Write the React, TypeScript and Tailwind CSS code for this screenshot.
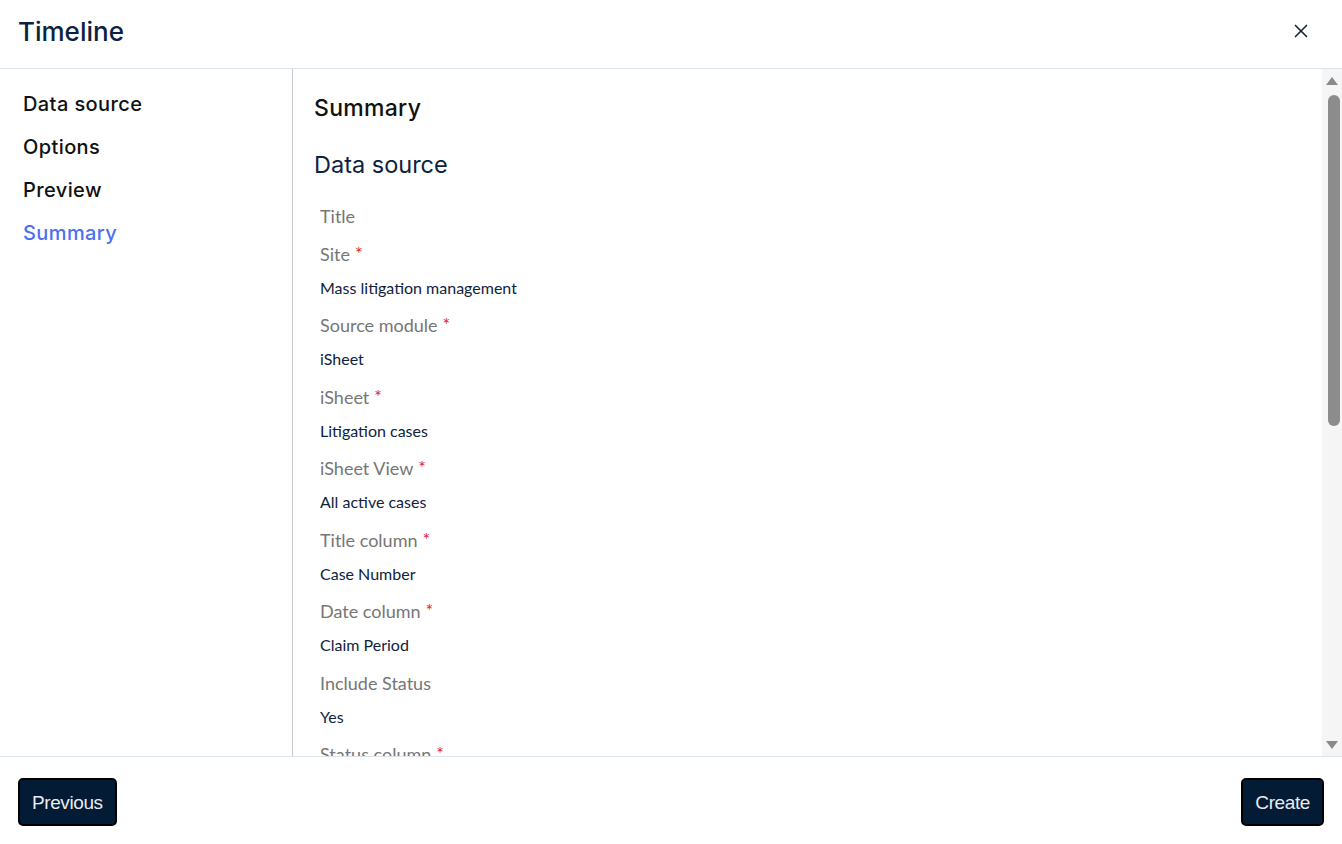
import { X } from "lucide-react";

const steps = ["Data source", "Options", "Preview", "Summary"];

const fields: { label: string; required?: boolean; value?: string }[] = [
  { label: "Title" },
  { label: "Site", required: true, value: "Mass litigation management" },
  { label: "Source module", required: true, value: "iSheet" },
  { label: "iSheet", required: true, value: "Litigation cases" },
  { label: "iSheet View", required: true, value: "All active cases" },
  { label: "Title column", required: true, value: "Case Number" },
  { label: "Date column", required: true, value: "Claim Period" },
  { label: "Include Status", value: "Yes" },
  { label: "Status column", required: true, value: "Status" },
];

const heading = { fontFamily: "Inter, 'Noto Sans', sans-serif" };
const body = { fontFamily: "Lato, 'Noto Sans', sans-serif" };

const Field = ({ label, required, value }: { label: string; required?: boolean; value?: string }) => (
  <div className="flex flex-col">
    <div className="h-[38px] flex items-center text-[18px] text-[#767676]">
      {label}
      {required && <span className="ml-[5px] text-[#e11d1d] text-[18px] -mt-[2px]">*</span>}
    </div>
    {value && <div className="h-[33.5px] pb-[4px] flex items-center text-[16px] text-[#0f2240]">{value}</div>}
  </div>
);

// classic scrollbar with arrow buttons
const ScrollRail = () => (
  <div className="w-[20px] bg-[#f5f5f5] flex flex-col items-center">
    <svg width="14" height="10" viewBox="0 0 14 10" className="mt-[7px]">
      <path d="M7 1 L13 9 L1 9 Z" fill="#8a8a8a" />
    </svg>
    <div className="mt-[9px] ml-[4px] w-[12px] h-[331px] rounded-full bg-[#8c8c8c]" />
    <div className="flex-1" />
    <svg width="14" height="10" viewBox="0 0 14 10" className="mb-[6px]">
      <path d="M1 1 L13 1 L7 9 Z" fill="#8a8a8a" />
    </svg>
  </div>
);

export default function App() {
  return (
    <div className="w-[1342px] h-[844px] bg-white flex flex-col overflow-hidden">
      <header className="h-[69px] shrink-0 flex items-center justify-between pl-[18px] pr-[30px] border-b border-[#dde3eb]">
        <h1 className="text-[26px] text-[#0b2340] font-medium -mt-[5px]" style={heading}>
          Timeline
        </h1>
        <X className="w-[22px] h-[22px] text-[#1a2436] -mt-[6px]" strokeWidth={1.8} />
      </header>

      <div className="flex flex-1 min-h-0">
        <nav className="w-[293px] shrink-0 border-r border-[#c8c8c8] pl-[23px] pt-[13px] flex flex-col" style={heading}>
          {steps.map((s) => (
            <div
              key={s}
              className={`h-[43px] flex items-center text-[20px] tracking-[0.4px] font-medium ${s === "Summary" ? "text-[#4d70f2]" : "text-[#111]"}`}
            >
              {s}
            </div>
          ))}
        </nav>

        <main className="flex-1 min-w-0 overflow-hidden pl-[21px] pt-[24px]">
          <h2 className="text-[23px] font-medium text-[#111] leading-[30px] tracking-[0.3px]" style={heading}>
            Summary
          </h2>
          <h3 className="mt-[27px] text-[23.5px] font-normal text-[#0b2340] leading-[30px]" style={heading}>
            Data source
          </h3>
          <div className="mt-[17px] pl-[6px] flex flex-col" style={body}>
            {fields.map((f) => (
              <Field key={f.label} {...f} />
            ))}
          </div>
        </main>

        <ScrollRail />
      </div>

      <footer className="h-[88px] shrink-0 border-t border-[#dde3eb] flex items-center justify-between px-[18px] pt-[2px]">
        {["Previous", "Create"].map((b) => (
          <button
            key={b}
            className="h-[48px] px-[12px] rounded-[5px] bg-[#031b34] border-2 border-black text-[#e8ecf2] text-[19px] tracking-[-0.4px] pt-[3px]"
            style={{ fontFamily: "'Liberation Sans', Arial, sans-serif" }}
          >
            {b}
          </button>
        ))}
      </footer>
    </div>
  );
}
